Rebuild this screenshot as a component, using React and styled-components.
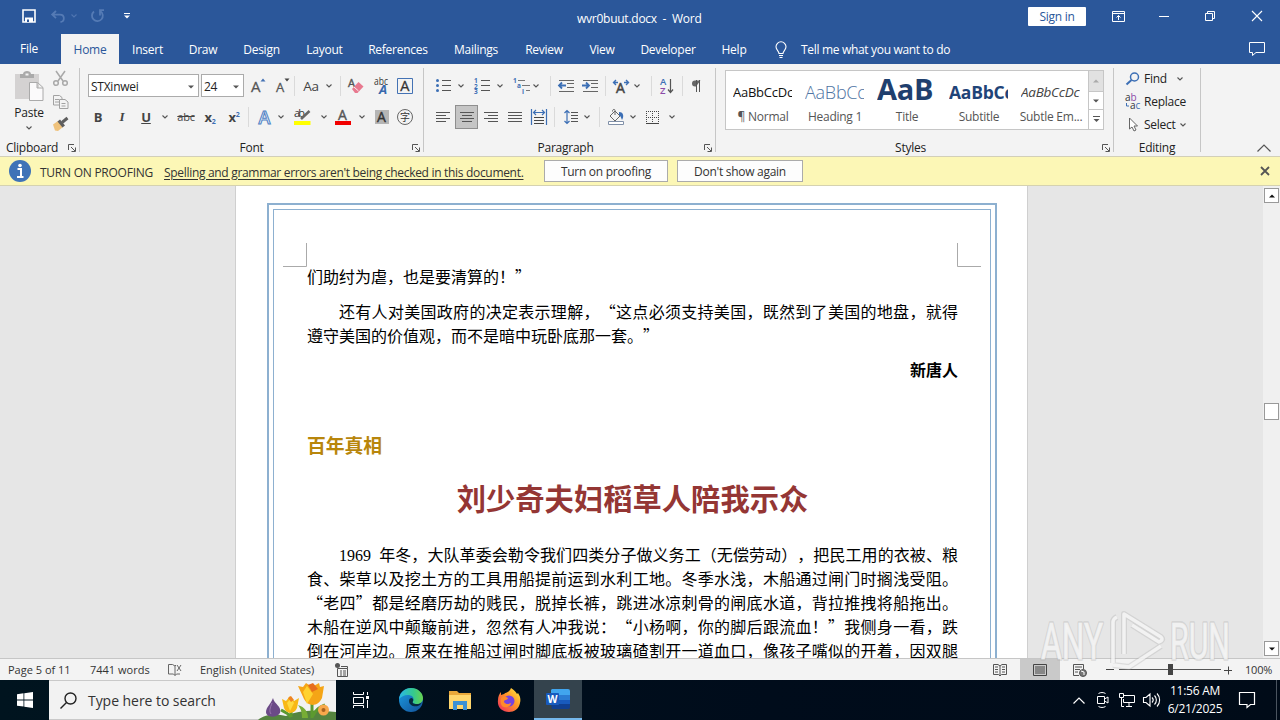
import React from 'react'
import styled, {createGlobalStyle} from 'styled-components';


const GlobalStyle = createGlobalStyle`
    *{
        box-sizing: border-box;
    }
    body{
        margin: 0;
        overflow: hidden;
        font-family: "Open Sans", "Noto Sans", "Noto Sans CJK SC", sans-serif;
        font-size: 12px;
        letter-spacing: -.25px;
        color: #222;
    }
    svg{
        display: block;
        flex: none;
        overflow: visible;
        letter-spacing: 0;
    }
`;

const Svg = ({w = 16, h = 16, children, ...rest}) => (
    <svg width={w} height={h} viewBox={`0 0 ${w} ${h}`} fill="none" {...rest}>{children}</svg>
)

const Chevron = ({color = '#555'}) => (
    <Svg w={6} h={4} stroke={color} strokeWidth="1.1"><path d="M.5 .5 3 3 5.5 .5" /></Svg>
)

const Triangle = ({color = '#555', up, w = 6}) => (
    <Svg w={w} h={4} viewBox="0 0 6 4" fill={color}><path d={up ? 'M0 3.5h6L3 .5z' : 'M0 .5h6L3 3.5z'} /></Svg>
)

const Launcher = () => (
    <Svg w={8} h={8} stroke="#555"><path d="M.5 6V.5H6M3 3l4 4M7.5 3.5v4h-4" /></Svg>
)

/* text lines of the alignment icons: [x1, x2] for each line */
const Lines = ({rows, color = '#555', ...rest}) => (
    <Svg w={14} h={11} stroke={color} {...rest}>
        {rows.map(([a, b], i) => <path key={i} d={`M${a} ${i * 3 + .5}H${b}`} />)}
    </Svg>
)

const tabs = [
    ['Insert', 57], ['Draw', 54], ['Design', 63], ['Layout', 63], ['References', 84], ['Mailings', 72],
    ['Review', 64], ['View', 52], ['Developer', 80], ['Help', 52],
]

const styleItems = [
    {name: '¶ Normal', preview: 'AaBbCcDc', size: 13, color: '#111'},
    {name: 'Heading 1', preview: 'AaBbCc', size: 18, color: '#4f74a3', weight: 300},
    {name: 'Title', preview: 'AaB', size: 29, color: '#1f3f6e', weight: 700},
    {name: 'Subtitle', preview: 'AaBbCc', size: 17.5, color: '#1f4478', weight: 700},
    {name: 'Subtle Em...', preview: 'AaBbCcDc', size: 13.5, color: '#444', italic: true},
]


function TitleBar() {
    return (
        <TitleBarStyled>
            <Slot $w={49}>
                <SaveIcon w={14} h={14}>
                    <path d="M1 1h12v12H1z" stroke="#fff" strokeWidth="1.6" />
                    <path d="M3 8.5h8V13H3z" fill="#fff" />
                    <path d="M5 10.5h2V13H5z" fill="#2b579a" />
                </SaveIcon>
            </Slot>
            <Slot $w={17}>
                <Svg w={14} h={13} stroke="#557bb5" strokeWidth="1.8"><path d="M5 1 1.2 4.6 5 8.2M1.5 4.6H9c5 0 5 7 .5 7.4" /></Svg>
            </Slot>
            <Slot $w={16}><Chevron color="#4f75b1" /></Slot>
            <Slot $w={29}>
                <Svg w={14} h={14} stroke="#557bb5" strokeWidth="1.8"><path d="M10.5 2.3A5.4 5.4 0 1 1 4 2.5M10 6.5V1.2h4" /></Svg>
            </Slot>
            <Slot $w={31}>
                <Svg w={6} h={6}><path d="M0 .5h6" stroke="#fff" /><path d="M0 2.5h6l-3 3z" fill="#fff" /></Svg>
            </Slot>
            <DocTitle>wvr0buut.docx&nbsp; -&nbsp; Word</DocTitle>
            <SignIn>Sign in</SignIn>
            <Slot $w={64}>
                <Svg w={13} h={11} stroke="#fff"><path d="M.5 .5h12v10H.5zM.5 2.5h12M6.5 9V4.5M4.5 6.5l2-2 2 2" /></Svg>
            </Slot>
            <Slot $w={28}><Svg w={10} h={1} stroke="#fff"><path d="M0 .5h10" /></Svg></Slot>
            <Slot $w={64}>
                <Svg w={10} h={10} stroke="#fff"><path d="M.5 2.5h7v7h-7zM2.5 2V.5h7v7H8" /></Svg>
            </Slot>
            <Slot $w={29}><Svg w={10} h={10} stroke="#fff" strokeWidth="1.1"><path d="m0 0 10 10M10 0 0 10" /></Svg></Slot>
        </TitleBarStyled>
    )
}

function TabBar() {
    return (
        <TabBarStyled>
            <FileTab>File</FileTab>
            <ActiveTab>Home</ActiveTab>
            {tabs.map(([name, w]) => <Tab key={name} $w={w}>{name}</Tab>)}
            <Slot $w={41}>
                <Svg w={12} h={17} stroke="#fff" strokeWidth="1.1">
                    <path d="M4 12.5c0-2.5-3-3.5-3-6.7a5 5 0 0 1 10 0c0 3.2-3 4.2-3 6.7zM4 14.5h4M4.5 16.5h3" />
                </Svg>
            </Slot>
            <TellMe>Tell me what you want to do</TellMe>
            <Slot $w={46}>
                <Svg w={16} h={14} stroke="#fff"><path d="M.5 .5h15v10H7l-3.5 3v-3h-3z" /></Svg>
            </Slot>
        </TabBarStyled>
    )
}

function ClipboardGroup() {
    return (
        <Group $w={80}>
            <ClipboardBody>
                <Paste>
                    <Svg w={29} h={31}>
                        <path d="M0 3h24v25H0z" fill="#d4d2d2" />
                        <path d="M5 3h3c0-4 8-4 8 0h3v4H5z" fill="#aaa" />
                        <path d="M10.500 2.500h3v2h-3z" fill="#f3f3f3" />
                        <path d="M14.500 11.500h8l5.500 5v13H14.500zM22 11.500V17h6" fill="#fbfafb" stroke="#aaa" />
                    </Svg>
                    <span>Paste</span>
                    <Chevron />
                </Paste>
                <ClipTools>
                    <Svg w={15} h={16} stroke="#a9a9a9" strokeWidth="1.5">
                        <path d="M3 0l7 10M12 0 5 10" /><circle cx="3" cy="12" r="2.300" /><circle cx="12" cy="12" r="2.300" />
                    </Svg>
                    <Svg w={16} h={14} fill="#f3f3f3" stroke="#a2a2a2">
                        <path d="M.5 .5h6l2.500 2v7.500H.5zM2 4.500h4M2 7h4" />
                        <path d="M6.500 4.500h5.500l3 2.500v6.500H6.500zM8.500 8.500h4M8.500 11h4" />
                    </Svg>
                    <Svg w={16} h={14}>
                        <path d="M0 7.500 5 4l5 6-5 4-3-.5z" fill="#efc27c" />
                        <path d="M4.500 4.500 7 2.500l5 6-2.500 2z" fill="#5e5e5e" />
                        <path d="m9 5.500 5.500-4.500" stroke="#5e5e5e" strokeWidth="3" />
                    </Svg>
                </ClipTools>
            </ClipboardBody>
            <Caption $left={6}><span>Clipboard</span><Launcher /></Caption>
        </Group>
    )
}

function FontGroup() {
    return (
        <Group $w={344}>
            <Row $pad={8} $h={35}>
                <Combo $w={111}>STXinwei<Triangle /></Combo>
                <Combo $w={43}>24<Triangle /></Combo>
                <Slot $w={24}>
                    <Svg><text x="1" y="14" fontSize="15" fill="#555" stroke="#555" strokeWidth=".3">A</text><path d="M10.500 3.500h5L13 .5z" fill="#4472b4" /></Svg>
                </Slot>
                <Slot $w={24}>
                    <Svg><text x="2" y="14" fontSize="13" fill="#555" stroke="#555" strokeWidth=".3">A</text><path d="M10.500 .5h5L13 3.500z" fill="#444" /></Svg>
                </Slot>
                <Divider />
                <Slot $w={32}><Glyph $size={13.5}>Aa</Glyph></Slot>
                <Slot $w={4}><Chevron /></Slot>
                <Slot $w={9} />
                <Divider />
                <Slot $w={30}>
                    <Svg>
                        <text x="0" y="9" fontSize="11" fill="#555" stroke="#555" strokeWidth=".4">A</text>
                        <path d="m4 11 6.500-7 5 4.500-6 6.500H7z" fill="#e8798f" /><path d="m6 9 4.500 4" stroke="#f3f3f3" />
                    </Svg>
                </Slot>
                <Slot $w={20}>
                    <Svg>
                        <text x="1" y="7" fontSize="10" fill="#333" textLength="14" lengthAdjust="spacingAndGlyphs">abc</text>
                        <text x="6" y="16" fontSize="13" fontWeight="700" fontStyle="italic" fill="#3869ad">A</text>
                    </Svg>
                </Slot>
                <Slot $w={28}>
                    <Svg><path d="M.5 .5h15v15H.5z" stroke="#4472b4" /><text x="3.300" y="13" fontSize="14.500" fill="#333" stroke="#333" strokeWidth=".3">A</text></Svg>
                </Slot>
            </Row>
            <Row $pad={6} $h={28}>
                <Slot $w={24}><Glyph $bold>B</Glyph></Slot>
                <Slot $w={24}><Glyph $serif>I</Glyph></Slot>
                <Slot $w={24}><Glyph $bold $line="underline">U</Glyph></Slot>
                <Slot $w={14}><Chevron /></Slot>
                <Slot $w={28}><Glyph $size={11} $line="line-through">abc</Glyph></Slot>
                <Slot $w={20}><Glyph $bold>x<sub>2</sub></Glyph></Slot>
                <Slot $w={28}><Glyph $bold>x<sup>2</sup></Glyph></Slot>
                <Divider />
                <Slot $w={32}>
                    <Svg><text x="1.500" y="14.500" fontSize="18" fontWeight="600" fill="#eef4fb" stroke="#4f81c4" strokeWidth="1">A</text></Svg>
                </Slot>
                <Slot $w={0}><Chevron /></Slot>
                <Slot $w={43}>
                    <Svg w={17}>
                        <text x="0" y="8" fontSize="11" fill="#333" textLength="11">ab</text>
                        <path d="m7 10 8.500-8" stroke="#666" strokeWidth="2.500" /><path d="M0 12h16.500v4H0z" fill="#ff0" />
                    </Svg>
                </Slot>
                <Slot $w={0}><Chevron /></Slot>
                <Slot $w={38}>
                    <Svg><text x="3" y="11" fontSize="14" fill="#555" stroke="#555" strokeWidth=".4">A</text><path d="M0 12h16v4H0z" fill="#f10000" /></Svg>
                </Slot>
                <Slot $w={0}><Chevron /></Slot>
                <Slot $w={40}>
                    <Svg w={14} h={14}><path d="M0 0h14v14H0z" fill="#b5b5b5" /><text x="2" y="12" fontSize="14" fill="#333" stroke="#333" strokeWidth=".4">A</text></Svg>
                </Slot>
                <Slot $w={6}>
                    <Svg><circle cx="8" cy="8" r="7.500" stroke="#666" /><text x="3" y="12" fontSize="10" fill="#333">字</text></Svg>
                </Slot>
            </Row>
            <Caption><span>Font</span><Launcher /></Caption>
        </Group>
    )
}

function ParagraphGroup() {
    const bulletLines = <path d="M6 2.500h9M6 7.500h9M6 12.500h9" stroke="#555" />
    return (
        <Group $w={292}>
            <Row $pad={8} $h={35}>
                <Slot $w={22}>
                    <Svg w={15} h={15}>{bulletLines}<g fill="#3c6fb5"><circle cx="1.500" cy="2.500" r="1.500" /><circle cx="1.500" cy="7.500" r="1.500" /><circle cx="1.500" cy="12.500" r="1.500" /></g></Svg>
                </Slot>
                <Slot $w={14}><Chevron /></Slot>
                <Slot $w={28}>
                    <Svg w={15} h={15}>{bulletLines}<g fill="#3c6fb5" fontSize="6.500" fontWeight="700"><text x="-1" y="5">1</text><text x="-1" y="10.500">2</text><text x="-1" y="16">3</text></g></Svg>
                </Slot>
                <Slot $w={8}><Chevron /></Slot>
                <Slot $w={36}>
                    <Svg w={16} h={15}><path d="M4 2.500h7M8 7.500h8M12 12.500h4" stroke="#777" /><g fill="#3c6fb5" fontSize="6.500" fontWeight="700"><text x="-1" y="5">1</text><text x="3" y="10">a</text><text x="8" y="15.500">i</text></g></Svg>
                </Slot>
                <Slot $w={-4}><Chevron /></Slot>
                <Slot $w={14} />
                <Divider />
                <Slot $w={29}>
                    <Svg w={16} h={12}><path d="M1 .5h15M9 3.500h7M9 7.500h7M1 11.500h15" stroke="#666" /><path d="M8 5.500H1M4 2.500l-3 3 3 3" stroke="#3c6fb5" strokeWidth="1.800" /></Svg>
                </Slot>
                <Slot $w={19}>
                    <Svg w={16} h={12}><path d="M1 .5h15M9 3.500h7M9 7.500h7M1 11.500h15" stroke="#666" /><path d="M0 5.500h7M4 2.500l3 3-3 3" stroke="#3c6fb5" strokeWidth="1.800" /></Svg>
                </Slot>
                <Slot $w={6} />
                <Divider />
                <Slot $w={30}>
                    <Svg w={16} h={14}><text x="3" y="14" fontSize="14" fill="#444" stroke="#444" strokeWidth=".5">A</text><path d="M5 3.500H.5M3 1 .5 3.500 3 6M11 3.500h4.500M13 1l2.500 2.500L13 6" stroke="#3c6fb5" strokeWidth="1.400" /></Svg>
                </Slot>
                <Slot $w={2}><Chevron /></Slot>
                <Slot $w={13} />
                <Divider />
                <Slot $w={29}>
                    <Svg w={14} h={16}><text x="0" y="7" fontSize="9.500" fontWeight="600" fill="#3c6fb5">A</text><text x="0" y="16" fontSize="9.500" fontWeight="600" fill="#8b4ba8">Z</text><path d="M10.500 1v13M8 11.500l2.500 3 2.500-3" stroke="#555" strokeWidth="1.200" /></Svg>
                </Slot>
                <Slot $w={1} />
                <Divider />
                <Slot $w={26}>
                    <Svg w={10} h={12}><path d="M9.500 .5H4a3 3 0 0 0 0 6h1z" fill="#666" /><path d="M5.500 0v12M8.500 0v12" stroke="#555" /></Svg>
                </Slot>
            </Row>
            <Row $pad={7} $h={28}>
                <Slot $w={24}><Lines rows={[[0, 14], [0, 10], [0, 14], [0, 10]]} /></Slot>
                <Pressed><Lines rows={[[0, 14], [2, 12], [0, 14], [2, 12]]} /></Pressed>
                <Slot $w={25}><Lines rows={[[0, 14], [4, 14], [0, 14], [4, 14]]} /></Slot>
                <Slot $w={23}><Lines rows={[[0, 14], [0, 14], [0, 14], [0, 14]]} /></Slot>
                <Slot $w={25}>
                    <Svg w={16} h={16}><path d="M.5 0v16M15.500 0v16M2 3.500h12M5 1 2.500 3.500 5 6M11 1l2.500 2.500L11 6" stroke="#3c6fb5" strokeWidth="1.200" /><path d="M3 8.500h10M3 11.500h10M3 14.500h10" stroke="#444" /></Svg>
                </Slot>
                <Slot $w={3} />
                <Divider />
                <Slot $w={31}>
                    <Svg w={14} h={16}><path d="M3 1.500v13M.5 4 3 1.500 5.500 4M.5 12 3 14.500 5.500 12" stroke="#3c6fb5" strokeWidth="1.200" /><path d="M7 3.500h7M7 6.500h7M7 9.500h7M7 12.500h7" stroke="#555" /></Svg>
                </Slot>
                <Slot $w={1}><Chevron /></Slot>
                <Slot $w={12} />
                <Divider />
                <Slot $w={31}>
                    <Svg w={16} h={16}><path d="m2 7 5-5 5 5-5 5zM7 6V1.500c0-2-3-1-2.500 1" stroke="#666" /><path d="M11 3c5 0 5 5 3 8-1-2-1-4-3-5z" fill="#3c6fb5" /><path d="M.5 12.500h15v3H.5z" fill="#fff" stroke="#8090a8" /></Svg>
                </Slot>
                <Slot $w={3}><Chevron /></Slot>
                <Slot $w={37}>
                    <Svg w={13} h={13} stroke="#444"><path d="M.5 0v12M6.500 0v12M12.500 0v12M0 .5h13M0 6.500h13" strokeDasharray="1 1" /><path d="M0 12.500h13" /></Svg>
                </Slot>
                <Slot $w={1}><Chevron /></Slot>
            </Row>
            <Caption $shift={-8}><span>Paragraph</span><Launcher /></Caption>
        </Group>
    )
}

function StylesGroup() {
    return (
        <Group $w={398}>
            <Gallery>
                {styleItems.map((item) => (
                    <StyleItem key={item.name}>
                        <Preview $size={item.size} $color={item.color} $weight={item.weight} $italic={item.italic}>{item.preview}</Preview>
                        <p>{item.name}</p>
                    </StyleItem>
                ))}
                <GalleryScroll>
                    <span><Triangle color="#aaa" up /></span>
                    <span><Triangle /></span>
                    <span><Svg w={7} h={7}><path d="M0 .5h7" stroke="#555" /><path d="M.5 3h6l-3 3z" fill="#555" /></Svg></span>
                </GalleryScroll>
            </Gallery>
            <Caption $shift={-8}><span>Styles</span><Launcher /></Caption>
        </Group>
    )
}

function EditingGroup() {
    return (
        <Group $w={87}>
            <EditList>
                <EditItem>
                    <Svg w={14} h={13} stroke="#3c6fb5" strokeWidth="1.500"><circle cx="8.500" cy="5" r="4" /><path d="m5.500 8-5 4.500" strokeWidth="2" /></Svg>
                    <span>Find</span><Chevron />
                </EditItem>
                <EditItem>
                    <Svg w={16} h={16}><text x="0" y="7" fontSize="10" fill="#333">a<tspan fill="#8b4ba8">b</tspan></text><text x="5" y="15" fontSize="10" fill="#333">a<tspan fill="#3c6fb5">c</tspan></text><path d="M1.500 9v3H4" stroke="#3c6fb5" /></Svg>
                    <span>Replace</span>
                </EditItem>
                <EditItem $tight>
                    <Svg w={14} h={15} stroke="#666"><path d="M3.500 1v11l2.500-2 2 4 2-1-2-4h3.500z" fill="#fff" /></Svg>
                    <span>Select</span><Chevron />
                </EditItem>
            </EditList>
            <Caption><span>Editing</span></Caption>
        </Group>
    )
}

function MessageBar() {
    return (
        <MessageBarStyled>
            <Svg w={22} h={22}>
                <circle cx="11" cy="11" r="11" fill="#3f73b7" />
                <circle cx="11" cy="5.500" r="1.800" fill="#fff" /><path d="M8.500 9h3.500v7M8 17h6.500" stroke="#fff" strokeWidth="2" />
            </Svg>
            <strong>TURN ON PROOFING</strong>
            <u>Spelling and grammar errors aren't being checked in this document.</u>
            <MessageButton $w={124}>Turn on proofing</MessageButton>
            <MessageButton $w={126}>Don't show again</MessageButton>
            <Svg w={8} h={8} stroke="#555" strokeWidth="1.800"><path d="m0 0 8 8M8 0 0 8" /></Svg>
        </MessageBarStyled>
    )
}

function Document() {
    return (
        <Workspace>
            <Page>
                <PageBorder>
                    <Margins>
                        <Svg w={24} h={24} stroke="#aaa"><path d="M23.500 0v23.500H0" /></Svg>
                        <Svg w={24} h={24} stroke="#aaa"><path d="M.5 0v23.500H24" /></Svg>
                    </Margins>
                    <Line>们助纣为虐，也是要清算的！”</Line>
                    <Line $justify $indent $top={11}>还有人对美国政府的决定表示理解，“这点必须支持美国，既然到了美国的地盘，就得</Line>
                    <Line>遵守美国的价值观，而不是暗中玩卧底那一套。”</Line>
                    <Line $right $top={10}>新唐人</Line>
                    <Section>百年真相</Section>
                    <Headline>刘少奇夫妇稻草人陪我示众</Headline>
                    <Line $justify $indent><span>1969&nbsp; </span>年冬，大队革委会勒令我们四类分子做义务工（无偿劳动），把民工用的衣被、粮</Line>
                    <Line $justify>食、柴草以及挖土方的工具用船提前运到水利工地。冬季水浅，木船通过闸门时搁浅受阻。</Line>
                    <Line $justify>“老四”都是经磨历劫的贱民，脱掉长裤，跳进冰凉刺骨的闸底水道，背拉推拽将船拖出。</Line>
                    <Line $justify>木船在逆风中颠簸前进，忽然有人冲我说：“小杨啊，你的脚后跟流血！”我侧身一看，跌</Line>
                    <Line $justify>倒在河岸边。原来在推船过闸时脚底板被玻璃碴割开一道血口，像孩子嘴似的开着，因双腿</Line>
                </PageBorder>
            </Page>
            <Scrollbar>
                <ScrollButton><Triangle color="#111" w={8} up /></ScrollButton>
                <Thumb />
                <ScrollButton><Triangle color="#111" w={8} /></ScrollButton>
            </Scrollbar>
        </Workspace>
    )
}

function StatusBar() {
    return (
        <StatusBarStyled>
            <Status $w={82}>Page 5 of 11</Status>
            <Status $w={78}>7441 words</Status>
            <Status $w={32}>
                <Svg w={14} h={13} stroke="#666"><path d="M7 12.500 5.500 11H.5V1.500h4L7 3zM7 3l1-1M7 12.500 8.500 11H12M9 2l4 6M13 2 9 8" /></Svg>
            </Status>
            <Status $w={135}>English (United States)</Status>
            <Status $grow>
                <Svg w={13} h={14} stroke="#555"><path d="M2.500 5.500h10v8h-10zM6 3.500h6.500v2M5 8h2M8 8h3M5 10h2M8 10h3M5 12h2M8 12h3" /><circle cx="2.500" cy="2.500" r="2.500" fill="#555" stroke="none" /></Svg>
            </Status>
            <Slot $w={41}>
                <Svg w={14} h={12} stroke="#555"><path d="M7 2 5 .5H.5v10h5L7 12l1.500-1.500h5V.5H9zV12M2 3h3M2 5.500h3M2 8h3M9 3h3M9 5.500h3M9 8h3" /></Svg>
            </Slot>
            <ActiveView>
                <Svg w={14} h={12} stroke="#444"><path d="M.5 .5h13v11H.5zM2 3h10M2 5h10M2 7h10M2 9h10" /></Svg>
            </ActiveView>
            <Slot $w={40}>
                <Svg w={14} h={12} stroke="#555"><path d="M6 11.500H.5V.5h10V5M2 3h7M2 5.500h5M2 8h3" /><circle cx="10" cy="9" r="3.500" fill="#777" /><path d="m8 7 3 1v3" stroke="#fff" /></Svg>
            </Slot>
            <Slot $w={19}><Svg w={8} h={1} stroke="#444"><path d="M0 .5h8" /></Svg></Slot>
            <Zoom><i /></Zoom>
            <Slot $w={14}><Svg w={8} h={8} stroke="#444"><path d="M0 4.500h8M4.500 .5v8" /></Svg></Slot>
            <Percent>100%</Percent>
        </StatusBarStyled>
    )
}

const Flowers = () => (
    <Svg w={80} h={39}>
        <path d="M2 39c8-7 20-6 28-4 12-6 28-6 50-4v8z" fill="#55843f" />
        <path d="M35 36V24M56 37V16M56 36c4-8 8-10 13-12M35 36c-4-5-8-6-10-7" stroke="#5c9a2f" strokeWidth="3" />
        <path d="M42 24c7 2 10 7 10 13h-6c0-6-1-9-4-13z" fill="#77ad35" />
        <path d="M17 17c1 6 9 8 7 15-3 5-14 5-14-1 0-5 5-8 7-14z" fill="#6b4a87" /><path d="M16 22c-2 5-3 8-1 11" stroke="#9a78ae" />
        <path d="M26 18l4 2 4-5 4 5 5-3-2 10c-3 7-11 6-13 0z" fill="#f8b814" /><path d="m35 17-4 5 3 8 4-8z" fill="#ffda3c" /><path d="m32 17 3-2 3 4-3 2z" fill="#ee8422" />
        <path d="M42 5l5 1 3-4 6 4 7-4 1 4 4-1-2 12c-4 9-14 9-18 1z" fill="#f5a516" /><path d="m51 5-4 6 4 12 6-10z" fill="#ffd231" /><path d="m52 4 5-2 5 6-6 3z" fill="#e66d1c" />
        <circle cx="67.500" cy="29" r="5.500" fill="#f8a84c" /><circle cx="67.500" cy="29" r="2" fill="#a86320" />
    </Svg>
)

const Edge = () => (
    <Svg w={24} h={24}>
        <defs>
            <linearGradient id="edgeTop" x1="0" y1="0" x2="1" y2="0"><stop stopColor="#2ab7e9" /><stop offset=".6" stopColor="#35c98d" /><stop offset="1" stopColor="#68d34e" /></linearGradient>
            <linearGradient id="edgeBase" x1="0" y1="0" x2="1" y2="1"><stop stopColor="#1b9de2" /><stop offset="1" stopColor="#124f97" /></linearGradient>
        </defs>
        <circle cx="12" cy="12" r="12" fill="url(#edgeBase)" />
        <path d="M0 11C1 4 6 0 12 0c7 0 12 5 12 10 0 4-3 6-6 6-4 0-5-1.500-4-3 2-4-2-6-5-6-4 0-7 2-9 4z" fill="url(#edgeTop)" />
        <path d="M14 13c-1 2 0 3 4 3 2 0 4-.5 5-2-1 2-2 3-4 4-5 1-9-1-9-5 0-2 1-3 3-3 1 1 2 2 1 3z" fill="#06283f" />
    </Svg>
)

const Firefox = () => (
    <Svg w={24} h={24}>
        <defs><linearGradient id="fox" x1="1" y1="0" x2="0" y2="1"><stop stopColor="#fff045" /><stop offset=".45" stopColor="#ff9626" /><stop offset="1" stopColor="#ee2462" /></linearGradient></defs>
        <path d="M14 0c3 2 5 4 6 6l1-1c2 3 3 6 2 10-1 6-6 9-11 9C5 24 0 19 1 12c0-3 1-6 3-8v3l3-1c2-2 5-1 7-6z" fill="url(#fox)" />
        <circle cx="12" cy="13" r="5.500" fill="#7543df" /><path d="M4 10c3-3 5-1 7 0-1 3-4 1-4 4 2 3 5 2 7 1 0 3-4 5-7 4-3 0-4-5-3-9z" fill="#ff8a2a" />
    </Svg>
)

function Taskbar() {
    return (
        <TaskbarStyled>
            <Slot $w={49}>
                <Svg w={16} h={16} fill="#fff"><path d="m0 2.300 6.500-1V7.500H0zM7.300 1.200 16 0v7.500H7.300zM0 8.400h6.500v6.200L0 13.700zM7.300 8.400H16V16l-8.700-1.200z" /></Svg>
            </Slot>
            <Search>
                <Svg w={17} h={17} stroke="#222" strokeWidth="1.400"><circle cx="10.500" cy="6.500" r="5.500" /><path d="M6.500 10.500 .5 16.500" /></Svg>
                <span>Type here to search</span>
                <Flowers />
            </Search>
            <Slot $w={50}>
                <Svg w={17} h={16} stroke="#fff"><path d="M.5 0v2.500h10V0M.5 5.500h10v6H.5zM.5 16v-2.500h10V16M14.500 0v3M14.500 8v8" /><path d="M13 4h3v3h-3z" fill="#fff" stroke="none" /></Svg>
            </Slot>
            <Slot $w={50}><Edge /></Slot>
            <Slot $w={48}>
                <Svg w={22} h={20}><path d="M0 1h8l2 2h12v16H0z" fill="#e9a83a" /><path d="M0 5h22v14H0z" fill="#ffd66d" /><path d="M4 11h14v9h-4v-5H8v5H4z" fill="#3b91d5" /></Svg>
            </Slot>
            <Slot $w={50}><Firefox /></Slot>
            <ActiveApp>
                <Svg w={24} h={20}>
                    <path d="M6 0h16a2 2 0 0 1 2 2v4H5V1z" fill="#41a5ee" /><path d="M5 6h19v5H5z" fill="#2b7cd3" /><path d="M5 11h19v5H5z" fill="#185abd" /><path d="M5 15h19v3a2 2 0 0 1-2 2H6z" fill="#103f91" />
                    <rect y="4" width="13" height="12" rx="1" fill="#185abd" /><text x="1.500" y="14" fontSize="10" fontWeight="700" fill="#fff" textLength="10" lengthAdjust="spacingAndGlyphs">W</text>
                </Svg>
            </ActiveApp>
            <Tray>
                <Slot $w={24}><Svg w={12} h={7} stroke="#fff" strokeWidth="1.200"><path d="m.5 6.500 5.500-5.500 5.500 5.500" /></Svg></Slot>
                <Slot $w={24}><Svg w={12} h={16} stroke="#fff"><path d="M.5 4.500h7v7h-7zM7.500 7l3.500-2v6L7.500 9M1.500 1.500c2-1.300 5-1.300 7 0M1.500 14.500c2 1.300 5 1.300 7 0" /></Svg></Slot>
                <Slot $w={24}><Svg w={16} h={14} stroke="#fff"><path d="M5 2.500h10.500v7H4.500V6M10 10v3M7 13.500h6M.5 .5h4v4h-4zM2.500 4.500v9H5" /></Svg></Slot>
                <Slot $w={24}><Svg w={17} h={14} stroke="#fff" strokeWidth="1.100"><path d="M.5 4.500H3l4-3.500v12L3 9.500H.5zM9 4.500c1.500 1.500 1.500 3.500 0 5M11.500 2.500c2.500 2.500 2.500 6.500 0 9M14 .5c3.500 3.500 3.500 9.500 0 13" /></Svg></Slot>
                <Clock><p>11:56 AM</p><p>6/21/2025</p></Clock>
                <Slot $w={40}><Svg w={16} h={16} stroke="#fff" strokeWidth="1.200"><path d="M.5 .5h15v12h-4L8 15.500v-3H.5z" /></Svg></Slot>
            </Tray>
        </TaskbarStyled>
    )
}

function Watermark() {
    const play = 'M75 55V14q0-3 4-5M86 46V6l37 23q3 3-2 5L94 17M123 38 91 59l-16-2'
    return (
        <WatermarkStyled>
            <Svg w={194} h={62}>
                <g fontSize="50" fontFamily="Roboto" strokeLinejoin="round">
                    <g fill="none" stroke="#aaa" strokeOpacity=".3" strokeWidth="4">
                        <text x="3" y="51" textLength="62" lengthAdjust="spacingAndGlyphs">ANY</text>
                        <text x="132" y="51" textLength="60" lengthAdjust="spacingAndGlyphs">RUN</text>
                    </g>
                    <g fill="#f7f7f7" stroke="#f7f7f7" strokeWidth=".6" opacity=".85">
                        <text x="3" y="51" textLength="62" lengthAdjust="spacingAndGlyphs">ANY</text>
                        <text x="132" y="51" textLength="60" lengthAdjust="spacingAndGlyphs">RUN</text>
                    </g>
                </g>
                <path d={play} stroke="#aaa" strokeOpacity=".3" strokeWidth="6" strokeLinejoin="round" />
                <path d={play} stroke="#f7f7f7" strokeOpacity=".85" strokeWidth="3.500" strokeLinejoin="round" />
            </Svg>
        </WatermarkStyled>
    )
}

function App() {
    return (
        <AppStyled>
            <GlobalStyle />
            <TitleBar />
            <TabBar />
            <Ribbon>
                <ClipboardGroup />
                <FontGroup />
                <ParagraphGroup />
                <StylesGroup />
                <EditingGroup />
                <Collapse>
                    <Svg w={14} h={8} stroke="#555" strokeWidth="1.200"><path d="M.5 7.500 7 1l6.500 6.500" /></Svg>
                </Collapse>
            </Ribbon>
            <MessageBar />
            <Document />
            <StatusBar />
            <Taskbar />
            <Watermark />
        </AppStyled>
    )
}


const AppStyled = styled.div`
    position: relative;
    width: 1280px;
    height: 720px;
    display: flex;
    flex-direction: column;
    overflow: hidden;
    p{
        margin: 0;
    }
`;

const Slot = styled.div`
    width: ${({$w}) => Math.max($w, 0)}px;
    margin-left: ${({$w}) => Math.min($w, 0)}px;
    flex: none;
    display: flex;
    align-items: center;
    justify-content: center;
`;

const SaveIcon = styled(Svg)`
    margin-left: 9px;
`;

const TitleBarStyled = styled.header`
    height: 32px;
    flex: none;
    display: flex;
    align-items: center;
    padding-right: 9px;
    background: #2b579a;
    color: #fff;
`;

const DocTitle = styled.div`
    flex: 1;
    padding: 4px 0 0 435px;
    white-space: nowrap;
`;

const SignIn = styled.button`
    width: 58px;
    height: 19px;
    padding: 0;
    border: 0;
    border-radius: 1px;
    background: #fff;
    color: #2b579a;
    font: inherit;
    letter-spacing: inherit;
`;

const TabBarStyled = styled.nav`
    height: 32px;
    flex: none;
    display: flex;
    align-items: center;
    padding-top: 2px;
    background: #2b579a;
    color: #fff;
    white-space: nowrap;
`;

const Tab = styled.div`
    width: ${({$w}) => $w}px;
    height: 30px;
    display: flex;
    align-items: center;
    justify-content: center;
`;

const FileTab = styled(Tab)`
    width: 58px;
    margin-right: 3px;
    padding-bottom: 1px;
`;

const ActiveTab = styled(Tab)`
    width: 58px;
    background: #f3f3f3;
    color: #2b579a;
`;

const TellMe = styled.div`
    flex: 1;
    font-weight: 500;
    letter-spacing: -.32px;
`;

const Ribbon = styled.section`
    height: 93px;
    flex: none;
    display: flex;
    padding: 4px 0;
    background: #f3f3f3;
    border-bottom: 1px solid #d2cfb8;
`;

const Group = styled.div`
    width: ${({$w}) => $w}px;
    flex: none;
    display: flex;
    flex-direction: column;
    border-right: 1px solid #c6c6c6;
`;

const Caption = styled.div`
    height: 16px;
    margin: auto 0 -4px;
    display: grid;
    grid-template-columns: ${({$left}) => ($left ? `${$left - 3}px auto 1fr` : '1fr auto 1fr')};
    align-items: center;
    padding: 0 3px;
    line-height: 16px;
    span{
        grid-column: 2;
        margin-left: ${({$shift}) => $shift || 0}px;
    }
    svg{
        justify-self: end;
    }
`;

const ClipboardBody = styled.div`
    height: 64px;
    display: flex;
    padding-top: 3px;
`;

const Paste = styled.div`
    width: 53px;
    padding-left: 5px;
    display: flex;
    flex-direction: column;
    align-items: center;
    span{
        margin: 2px 0 5px;
        line-height: 17px;
    }
`;

const ClipTools = styled.div`
    display: flex;
    flex-direction: column;
    gap: 8px;
`;

const Row = styled.div`
    height: ${({$h}) => $h}px;
    padding-left: ${({$pad}) => $pad}px;
    display: flex;
    align-items: center;
`;

const Combo = styled.div`
    width: ${({$w}) => $w}px;
    height: 23px;
    margin-right: 2px;
    padding: 2px 4px 0 2px;
    display: flex;
    flex: none;
    align-items: center;
    justify-content: space-between;
    background: #fff;
    border: 1px solid #ababab;
`;

const Divider = styled.div`
    width: 1px;
    height: 20px;
    flex: none;
    background: #dadada;
`;

const Glyph = styled.span`
    font-family: ${({$serif}) => ($serif ? '"Liberation Serif", serif' : 'inherit')};
    font-style: ${({$serif}) => ($serif ? 'italic' : 'normal')};
    font-size: ${({$size}) => $size || 13}px;
    font-weight: ${({$bold, $serif}) => ($bold || $serif ? 700 : 400)};
    text-decoration: ${({$line}) => $line || 'none'};
    line-height: 16px;
    color: #444;
    sub, sup{
        font-size: 7px;
        line-height: 0;
        color: #3c6fb5;
    }
    sub{
        vertical-align: -2px;
    }
    sup{
        vertical-align: 5px;
    }
`;

const Pressed = styled(Slot)`
    width: 23px;
    height: 24px;
    background: #c5c5c5;
    border: 1px solid #8f8f8f;
`;

const Gallery = styled.div`
    width: 379px;
    height: 60px;
    margin: 2px 0 0 9px;
    display: flex;
    padding-left: 1px;
    background: #fff;
    border: 1px solid #c6c6c6;
`;

const StyleItem = styled.div`
    width: 72px;
    flex: none;
    text-align: center;
    color: #555;
`;

const Preview = styled.div`
    width: 59px;
    height: 36px;
    margin: 0 auto 1px 6px;
    overflow: hidden;
    white-space: nowrap;
    text-align: left;
    line-height: ${({$size}) => ($size > 20 ? 35 : 43)}px;
    font-size: ${({$size}) => $size}px;
    font-weight: ${({$weight}) => $weight || 400};
    font-style: ${({$italic}) => ($italic ? 'italic' : 'normal')};
    color: ${({$color}) => $color};
`;

const GalleryScroll = styled.div`
    width: 15px;
    margin-left: auto;
    display: grid;
    grid-template-rows: 21px 18px 19px;
    span{
        display: flex;
        align-items: center;
        justify-content: center;
        border-left: 1px solid #c6c6c6;
        border-bottom: 1px solid #c6c6c6;
    }
    span:first-child{
        background: #e1e1e1;
    }
    span:last-child{
        border-bottom: 0;
    }
`;

const EditList = styled.div`
    margin-top: -1px;
    padding: 0 0 0 11px;
`;

const EditItem = styled.div`
    height: 23px;
    display: flex;
    align-items: center;
    span{
        margin-right: ${({$tight}) => ($tight ? 4 : 10)}px;
    }
    svg:first-child{
        width: 16px;
        margin-right: 3px;
    }
`;

const Collapse = styled.div`
    flex: 1;
    display: flex;
    align-items: flex-end;
    justify-content: flex-end;
    padding: 0 9px 0 0;
`;

const MessageBarStyled = styled.div`
    height: 29px;
    flex: none;
    display: flex;
    align-items: center;
    padding: 0 11px 0 9px;
    background: #fcf7b6;
    border-bottom: 1px solid #d5d2b0;
    color: #333;
    white-space: nowrap;
    strong{
        width: 124px;
        margin-left: 9px;
        padding-top: 2px;
        font-weight: 500;
    }
    u{
        width: 380px;
        padding-top: 2px;
        text-underline-offset: 2px;
        letter-spacing: -.31px;
    }
    > svg:last-child{
        margin-left: auto;
    }
`;

const MessageButton = styled.button`
    width: ${({$w}) => $w}px;
    height: 22px;
    margin-right: 9px;
    padding: 1px 0 0;
    background: #fdfdfd;
    border: 1px solid #ababab;
    color: #333;
    font: inherit;
    letter-spacing: -.28px;
`;

const Workspace = styled.main`
    height: 472px;
    flex: none;
    display: flex;
    background: #e6e6e6;
    overflow: hidden;
`;

const Page = styled.article`
    width: 793px;
    margin: 0 auto 0 235px;
    padding: 17px 30px 0 31px;
    flex: none;
    background: #fff;
    border: 1px solid #cfcfcf;
    border-width: 0 1px;
`;

/* double rule round the page: thick outside, thin inside */
const PageBorder = styled.div`
    width: 730px;
    height: 560px;
    padding: 38px 37px 0 38px;
    border: 2px solid #8db0d0;
    outline: 1px solid #8db0d0;
    outline-offset: -7px;
    color: #000;
    letter-spacing: 0;
`;

const Margins = styled.div`
    display: flex;
    justify-content: space-between;
    margin: 0 -23px -3px -24px;
`;

const Line = styled.div`
    width: 651px;
    height: 24px;
    margin-top: ${({$top}) => $top || 0}px;
    padding-left: ${({$indent}) => ($indent ? 32 : 0)}px;
    font-family: "Noto Sans CJK SC", sans-serif;
    font-size: 16px;
    font-weight: ${({$right}) => ($right ? 700 : 400)};
    line-height: 24px;
    white-space: nowrap;
    text-spacing-trim: space-all;
    text-align: ${({$right}) => ($right ? 'right' : 'left')};
    text-align-last: ${({$justify}) => ($justify ? 'justify' : 'auto')};
    span{
        font-family: "Liberation Serif", serif;
    }
`;

const Section = styled.h2`
    margin: 50px 0 0;
    font: 700 18.8px/28px "Noto Sans CJK SC", sans-serif;
    color: #b8860b;
`;

const Headline = styled.h1`
    margin: 16px 0 23px;
    font: 700 29.300px/44px "Noto Sans CJK SC", sans-serif;
    text-align: center;
    color: #943634;
`;

const Scrollbar = styled.div`
    width: 17px;
    padding: 2px 1px;
    display: flex;
    flex-direction: column;
    align-items: center;
    justify-content: space-between;
    background: #f0f0f0;
`;

const ScrollButton = styled.div`
    width: 15px;
    height: 15px;
    display: flex;
    align-items: center;
    justify-content: center;
    background: #fff;
    border: 1px solid #999;
`;

const Thumb = styled(ScrollButton)`
    height: 17px;
    margin-top: -22px;
`;

const StatusBarStyled = styled.footer`
    height: 22px;
    flex: none;
    display: flex;
    align-items: center;
    padding-left: 8px;
    background: #f3f3f3;
    border-top: 1px solid #c6c6c6;
    font-size: 11px;
    letter-spacing: 0;
    color: #333;
`;

const Status = styled.div`
    width: ${({$w}) => $w}px;
    flex: ${({$grow}) => ($grow ? '1' : 'none')};
    white-space: nowrap;
`;

const ActiveView = styled(Slot)`
    width: 40px;
    height: 21px;
    background: #c9c9c9;
`;

const Zoom = styled.div`
    width: 102px;
    height: 1px;
    display: flex;
    align-items: center;
    justify-content: center;
    background: #555;
    i{
        width: 5px;
        height: 11px;
        background: #444;
    }
`;

const Percent = styled.div`
    width: 45px;
    padding-left: 10px;
    letter-spacing: -.2px;
`;

const TaskbarStyled = styled.div`
    height: 40px;
    flex: none;
    display: flex;
    background: linear-gradient(90deg, #00141f, #000c1b 60%, #000b18);
    color: #fff;
`;

const Search = styled.div`
    width: 287px;
    display: flex;
    align-items: center;
    padding-left: 11px;
    background: #f2f2f2;
    border: 1px solid #c9c9c9;
    border-width: 1px 0;
    color: #333;
    span{
        margin-left: 11px;
        font-size: 14px;
        letter-spacing: -.05px;
        white-space: nowrap;
    }
    svg:last-child{
        margin-left: auto;
    }
`;

const ActiveApp = styled(Slot)`
    width: 48px;
    background: #34434d;
    border-bottom: 2px solid #76b9ed;
`;

const Tray = styled.div`
    margin-left: auto;
    display: flex;
    padding-right: 9px;
    border-right: 1px solid #4a545f;
    margin-right: 3px;
`;

const Clock = styled.div`
    width: 64px;
    padding-top: 2px;
    text-align: center;
    font-size: 12px;
    line-height: 18px;
`;

const WatermarkStyled = styled.div`
    position: absolute;
    left: 1038px;
    top: 608px;
    pointer-events: none;
`;

export default App;
